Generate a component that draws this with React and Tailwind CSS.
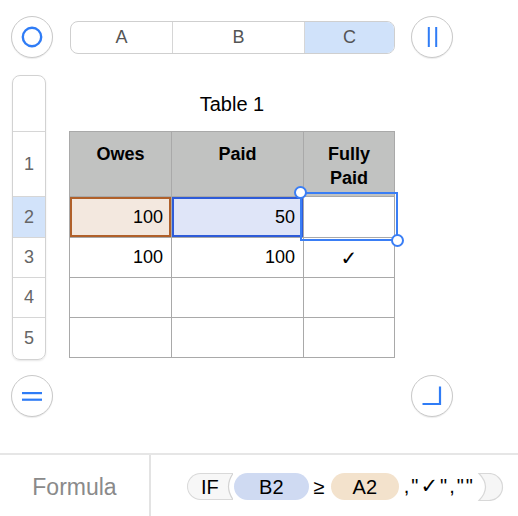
import React from 'react';

const BLUE = '#2f7cf6';

const CircleBtn = ({ children }) => (
  <div className="w-[42px] h-[42px] rounded-full border border-[#c9c9c9] bg-white shadow-[0_1px_1px_rgba(0,0,0,0.08)] flex items-center justify-center shrink-0">
    {children}
  </div>
);

const ROWS = [
  { n: '', h: 'h-[56px]' },
  { n: '1', h: 'h-[65px]' },
  { n: '2', h: 'h-[41px]', sel: true },
  { n: '3', h: 'h-[40px]' },
  { n: '4', h: 'h-[40px]' },
  { n: '5', h: 'h-[41px]' },
];

const cell = 'border-r border-b border-[#a9a9a9] flex items-center justify-end pr-[8px] text-[18px] text-black';

const App = () => {
  return (
    <div className="w-[518px] h-[516px] bg-white flex flex-col overflow-hidden" style={{ fontFamily: '"Liberation Sans", Arial, sans-serif' }}>
      {/* top bar */}
      <div className="flex items-center pt-[16px] pl-[11px]">
        <CircleBtn>
          <svg width="22" height="22" viewBox="0 0 22 22">
            <circle cx="11" cy="11" r="9.2" fill="none" stroke={BLUE} strokeWidth="2.4" />
          </svg>
        </CircleBtn>
        <div className="ml-[17px] w-[325px] h-[33px] rounded-[8px] border border-[#cfcfcf] flex overflow-hidden text-[18px] text-[#555]">
          <div className="w-[102px] border-r border-[#d6d6d6] flex items-center justify-center">A</div>
          <div className="w-[132px] border-r border-[#d6d6d6] flex items-center justify-center">B</div>
          <div className="flex-1 bg-[#d0e2fa] flex items-center justify-center">C</div>
        </div>
        <div className="ml-[16px]">
          <CircleBtn>
            <svg width="12" height="22" viewBox="0 0 12 22">
              <rect x="1.8" y="1" width="2" height="20" fill={BLUE} />
              <rect x="9.2" y="1" width="2" height="20" fill={BLUE} />
            </svg>
          </CircleBtn>
        </div>
      </div>

      {/* body */}
      <div className="flex mt-[17px] pl-[12px]">
        <div className="w-[34px] rounded-[8px] border border-[#d2d2d2] overflow-hidden shadow-[0_1px_2px_rgba(0,0,0,0.1)] flex flex-col">
          {ROWS.map((r, i) => (
            <div
              key={i}
              className={`${r.h} flex items-center justify-center text-[18px] text-[#666] ${i < ROWS.length - 1 ? 'border-b border-[#d6d6d6]' : ''} ${r.sel ? 'bg-[#d2e3fa]' : ''}`}
            >
              {r.n}
            </div>
          ))}
        </div>

        <div className="ml-[23px] w-[326px] flex flex-col">
          <div className="h-[56px] flex items-center justify-center text-[20px] text-black pt-[2px]">Table 1</div>
          <div className="relative grid grid-cols-[102px_132px_91px] border-l border-t border-[#a9a9a9]">
            {/* header */}
            <div className="h-[65px] border-r border-b border-[#a9a9a9] bg-[#c1c2c1] text-center font-bold text-[18px] leading-[24px] pt-[10px]">Owes</div>
            <div className="h-[65px] border-r border-b border-[#a9a9a9] bg-[#c1c2c1] text-center font-bold text-[18px] leading-[24px] pt-[10px]">Paid</div>
            <div className="h-[65px] border-r border-b border-[#a9a9a9] bg-[#c1c2c1] text-center font-bold text-[18px] leading-[24px] pt-[10px]">Fully<br />Paid</div>

            {/* row 2 */}
            <div className={`${cell} h-[41px] bg-[#f3e8df] shadow-[inset_0_0_0_2px_#b0602a]`}>100</div>
            <div className={`${cell} h-[41px] bg-[#dfe5f8] shadow-[inset_0_0_0_2px_#2e5bd8]`}>50</div>
            <div className={`${cell} h-[41px]`}></div>

            {/* row 3 */}
            <div className={`${cell} h-[40px]`}>100</div>
            <div className={`${cell} h-[40px]`}>100</div>
            <div className="h-[40px] border-r border-b border-[#a9a9a9] flex items-center justify-center text-[20px] text-black" style={{ fontFamily: '"DejaVu Sans", sans-serif' }}>✓</div>

            {/* rows 4, 5 */}
            <div className={`${cell} h-[40px]`}></div>
            <div className={`${cell} h-[40px]`}></div>
            <div className={`${cell} h-[40px]`}></div>
            <div className={`${cell} h-[40px]`}></div>
            <div className={`${cell} h-[40px]`}></div>
            <div className={`${cell} h-[40px]`}></div>

            {/* selection on C2 */}
            <div className="absolute left-[230px] top-[60px] w-[98px] h-[49px] border-2 border-[#3a7ef5] pointer-events-none" />
            <div className="absolute left-[224px] top-[54px] w-[13px] h-[13px] rounded-full bg-white border-2 border-[#3a7ef5]" />
            <div className="absolute left-[321px] top-[102px] w-[13px] h-[13px] rounded-full bg-white border-2 border-[#3a7ef5]" />
          </div>
        </div>
      </div>

      {/* bottom buttons */}
      <div className="flex items-center justify-between pl-[11px] w-[453px] mt-[15px]">
        <CircleBtn>
          <svg width="22" height="22" viewBox="0 0 22 22">
            <rect x="1" y="7" width="20" height="2.2" fill={BLUE} />
            <rect x="1" y="13.6" width="20" height="2.2" fill={BLUE} />
          </svg>
        </CircleBtn>
        <CircleBtn>
          <svg width="22" height="22" viewBox="0 0 22 22">
            <path d="M19 1.5 V19 H1.5" fill="none" stroke={BLUE} strokeWidth="2.2" />
          </svg>
        </CircleBtn>
      </div>

      {/* formula bar */}
      <div className="mt-[36px] flex-1 border-t-2 border-[#e6e6e6] flex">
        <div className="w-[151px] border-r-2 border-[#e3e3e3] flex items-center justify-center text-[23px] text-[#8a8a8a] pt-[4px]">Formula</div>
        <div className="flex items-center pl-[36px] pt-[2px] text-[20px] text-black">
          <div className="relative h-[27px] pl-[13px] pr-[14px] rounded-l-full border-y border-l border-[#d9d9d9] bg-[#f7f7f7] flex items-center">
            IF
            <svg className="absolute right-0 top-[-1px]" width="10" height="27" viewBox="0 0 10 27">
              <path d="M10 0.5 Q 1 13.5 10 26.5 L 10.5 26.5 L 10.5 0.5 Z" fill="#fff" />
              <path d="M10 0.5 Q 1 13.5 10 26.5" fill="none" stroke="#d2d2d2" strokeWidth="1.2" />
            </svg>
          </div>
          <div className="ml-[1px] h-[27px] w-[75px] rounded-full bg-[#cfdaf2] flex items-center justify-center">B2</div>
          <div className="ml-[2px] w-[16px] text-center">≥</div>
          <div className="ml-[4px] h-[27px] w-[68px] rounded-full bg-[#f3e2cc] flex items-center justify-center">A2</div>
          <div className="ml-[5px] tracking-[2px]">,"<span style={{ fontFamily: '"DejaVu Sans", sans-serif' }} className="text-[21px]">✓</span>",""</div>
          <svg className="ml-[2px]" width="28" height="28" viewBox="0 0 28 28">
            <path d="M2 0.5 L 12 0.5 A 13.5 13.5 0 0 1 12 27.5 L 2 27.5 Q 15 14 2 0.5 Z" fill="#f6f6f6" stroke="#d8d8d8" strokeWidth="1.2" />
          </svg>
        </div>
      </div>
    </div>
  );
};

export default App;
